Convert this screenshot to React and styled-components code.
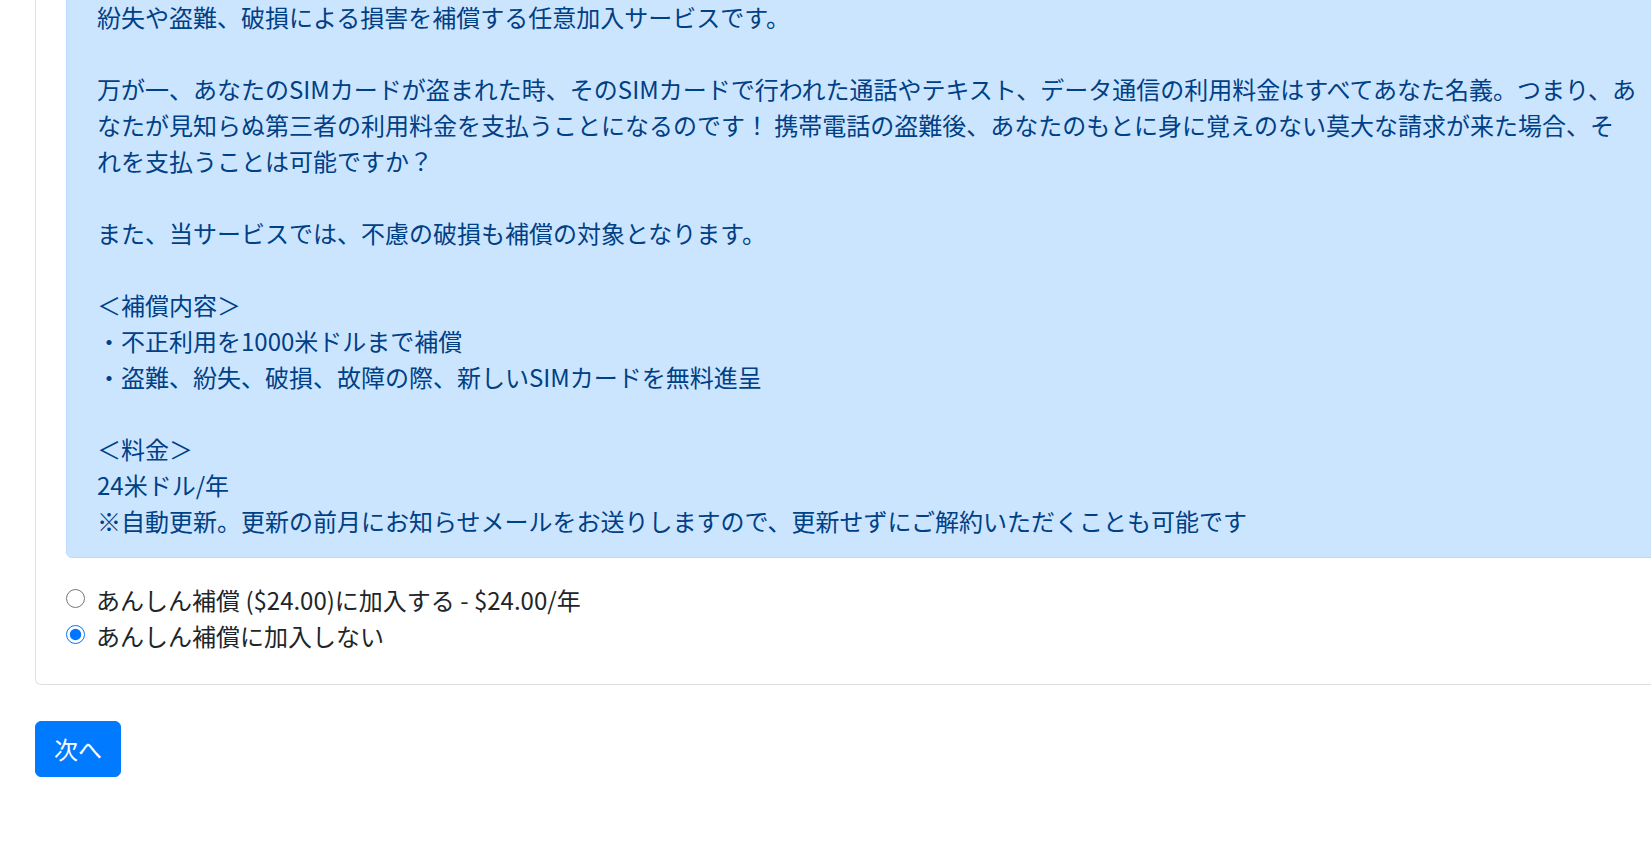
import React from "react";
import styled, { createGlobalStyle } from "styled-components";

const Global = createGlobalStyle`
  html, body {
    margin: 0;
    padding: 0;
    overflow: hidden;
    background: #fff;
  }
  body {
    font-family: "Noto Sans CJK JP", "Noto Sans", sans-serif;
    font-size: 24px;
    line-height: 36px;
    color: #212529;
  }
`;

const Page = styled.div`
  padding: 0 0 0 35px;
  margin-top: -51px;
`;

const Card = styled.div`
  width: 1700px;
  border: 1px solid rgba(0, 0, 0, 0.125);
  border-radius: 6px;
  background: #fff;
`;

const CardBody = styled.div`
  padding: 30px;
`;

const Alert = styled.div`
  padding: 18px 30px;
  margin-bottom: 24px;
  border: 1px solid #b8daff;
  border-radius: 6px;
  background: #cce5ff;
  color: #004085;
  white-space: pre-line;
`;

const Check = styled.label`
  display: flex;
  align-items: flex-start;
  gap: 11px;
  cursor: pointer;
`;

const Radio = styled.input`
  width: 19px;
  height: 19px;
  margin: 7px 0 0 0;
  flex: none;
`;

const NextButton = styled.button`
  margin-top: 36px;
  padding: 9px 18px;
  border: 1px solid #007bff;
  border-radius: 6px;
  background: #007bff;
  color: #fff;
  font-family: inherit;
  font-size: 24px;
  line-height: 36px;
  cursor: pointer;
`;

const text = `紛失や盗難、破損による損害を補償する任意加入サービスです。

万が一、あなたのSIMカードが盗まれた時、そのSIMカードで行われた通話やテキスト、データ通信の利用料金はすべてあなた名義。つまり、あ
なたが見知らぬ第三者の利用料金を支払うことになるのです！ 携帯電話の盗難後、あなたのもとに身に覚えのない莫大な請求が来た場合、そ
れを支払うことは可能ですか？

また、当サービスでは、不慮の破損も補償の対象となります。

＜補償内容＞
・不正利用を1000米ドルまで補償
・盗難、紛失、破損、故障の際、新しいSIMカードを無料進呈

＜料金＞
24米ドル/年
※自動更新。更新の前月にお知らせメールをお送りしますので、更新せずにご解約いただくことも可能です`;

export default function App() {
  const [choice, setChoice] = React.useState("no");
  return (
    <Page>
      <Global />
      <Card>
        <CardBody>
          <Alert>{text}</Alert>
          <Check>
            <Radio
              type="radio"
              name="insurance"
              checked={choice === "yes"}
              onChange={() => setChoice("yes")}
            />
            あんしん補償 ($24.00)に加入する - $24.00/年
          </Check>
          <Check>
            <Radio
              type="radio"
              name="insurance"
              checked={choice === "no"}
              onChange={() => setChoice("no")}
            />
            あんしん補償に加入しない
          </Check>
        </CardBody>
      </Card>
      <NextButton>次へ</NextButton>
    </Page>
  );
}
